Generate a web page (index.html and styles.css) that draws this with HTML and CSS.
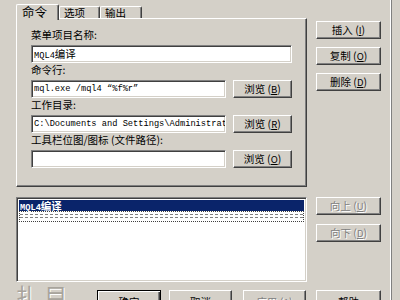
FILE: index.html
```html
<!DOCTYPE html>
<html lang="zh-CN">
<head>
  <meta charset="UTF-8" />
  <title>工具菜单</title>
  <link rel="stylesheet" href="styles.css">
</head>
<body>
<div class="window">
  <div class="dialog">

    <div class="tabbox">
      <div class="tabs">
        <div class="tab active">命令</div>
        <div class="tab">选项</div>
        <div class="tab last">输出</div>
      </div>
      <div class="panel">
        <div class="field-label">菜单项目名称:</div>
        <div class="field-row">
          <div class="textbox wide">MQL4<span class="cjk">编译</span></div>
        </div>

        <div class="field-label">命令行:</div>
        <div class="field-row">
          <div class="textbox">mql.exe /mql4 “%f%r”</div>
          <button class="btn browse">浏览 (<u>B</u>)</button>
        </div>

        <div class="field-label">工作目录:</div>
        <div class="field-row">
          <div class="textbox">C:\Documents and Settings\Administrat</div>
          <button class="btn browse">浏览 (<u>R</u>)</button>
        </div>

        <div class="field-label">工具栏位图/图标 (文件路径):</div>
        <div class="field-row">
          <div class="textbox"></div>
          <button class="btn browse">浏览 (<u>O</u>)</button>
        </div>
      </div>
    </div>

    <div class="side side-top">
      <button class="btn">插入 (<u>I</u>)</button>
      <button class="btn">复制 (<u>O</u>)</button>
      <button class="btn">删除 (<u>D</u>)</button>
    </div>

    <div class="listbox">
      <div class="list-item selected">MQL4<span class="cjk">编译</span></div>
      <div class="list-item sep"><div class="dashes"></div></div>
    </div>

    <div class="side side-bottom">
      <button class="btn disabled">向上 (<u>U</u>)</button>
      <button class="btn disabled">向下 (<u>D</u>)</button>
    </div>

    <div class="footer">
      <div class="ghost">扎 目</div>
      <button class="btn big default">确定</button>
      <button class="btn big cancel">取消</button>
      <button class="btn big apply disabled">应用 (<u>A</u>)</button>
      <button class="btn big help">帮助</button>
    </div>

  </div>
</div>
</body>
</html>
```

FILE: styles.css
```css
body {
  margin: 0;
  width: 400px;
  height: 300px;
  overflow: hidden;
  background: #d4d0c8;
  font-family: "Noto Sans CJK SC", sans-serif;
  font-size: 10.5px;
  color: #000;
}

.window {
  width: 390px;
  height: 300px;
  border-right: 1px solid #fff;
  box-shadow: 1px 0 0 #808080;
}

.dialog {
  display: grid;
  grid-template-columns: 291px 65px;
  column-gap: 9px;
  padding: 4px 0 0 16px;
}

/* tabs */
.tabs {
  display: flex;
  align-items: flex-end;
  height: 14px;
}

.tab {
  box-sizing: border-box;
  height: 12px;
  width: 41px;
  border-top: 1px solid #fff;
  border-left: 1px solid #fff;
  border-right: 1px solid #404040;
  border-radius: 2px 2px 0 0;
  box-shadow: inset -1px 0 0 #808080;
  padding-left: 4px;
  line-height: 11px;
  font-size: 10.5px;
}

.tab.last {
  width: 42px;
}

.tab.active {
  position: relative;
  height: 16px;
  width: 43px;
  margin-bottom: -2px;
  padding-left: 5px;
  background: #d4d0c8;
  font-size: 12.5px;
  line-height: 14px;
}

.panel {
  box-sizing: border-box;
  height: 169px;
  border: 1px solid;
  border-color: #fff #404040 #404040 #fff;
  box-shadow: inset -1px -1px 0 #808080;
  padding: 9px 0 0 14px;
}

.field-label {
  height: 14px;
  line-height: 14px;
  margin-bottom: 3px;
  white-space: nowrap;
}

.field-row {
  display: flex;
  gap: 7px;
  height: 18px;
}

.textbox {
  box-sizing: border-box;
  width: 195px;
  height: 18px;
  background: #fff;
  border: 1px solid;
  border-color: #808080 #fff #fff #808080;
  box-shadow: inset 1px 1px 0 #404040, inset -1px -1px 0 #d4d0c8;
  padding: 0 0 0 2px;
  font-family: "Liberation Mono", monospace;
  font-size: 8.7px;
  line-height: 16px;
  white-space: nowrap;
  overflow: hidden;
}

.textbox.wide {
  width: 261px;
}

.cjk {
  font-family: "Noto Sans CJK SC", sans-serif;
  font-size: 10.5px;
}

/* buttons */
.btn {
  box-sizing: border-box;
  width: 65px;
  height: 18px;
  padding: 0;
  background: #d4d0c8;
  border: 1px solid;
  border-color: #fff #404040 #404040 #fff;
  box-shadow: inset -1px -1px 0 #808080;
  font-family: "Noto Sans CJK SC", sans-serif;
  font-size: 10.5px;
  line-height: 14px;
  color: #000;
  white-space: nowrap;
}

.btn u {
  font-size: 9.5px;
}

.btn.browse {
  width: 59px;
}

.btn.disabled {
  color: #808080;
  text-shadow: 1px 1px 0 #fff;
}

.side {
  display: flex;
  flex-direction: column;
  gap: 8px;
}

.side-top {
  padding-top: 17px;
}

.side-bottom {
  margin-top: 10px;
  gap: 9px;
}

/* list */
.listbox {
  box-sizing: border-box;
  margin-top: 10px;
  height: 85px;
  background: #fff;
  border: 1px solid;
  border-color: #808080 #fff #fff #808080;
  box-shadow: inset 1px 1px 0 #404040, inset -1px -1px 0 #d4d0c8;
  padding: 2px 2px;
}

.list-item {
  height: 11px;
  line-height: 11px;
  padding-left: 1px;
  font-family: "Liberation Mono", monospace;
  font-size: 8.7px;
  font-weight: bold;
}

.list-item.selected {
  background: #0a246a;
  color: #fff;
}

.list-item.sep {
  box-sizing: border-box;
  border: 1px dotted #404040;
  padding: 2px 0 0;
}

.dashes {
  height: 2px;
  border-top: 1px dashed #808080;
  border-bottom: 1px dashed #808080;
}

/* footer */
.footer {
  grid-column: 1 / -1;
  display: flex;
  margin-top: 8px;
}

.ghost {
  width: 81px;
  margin-top: -8px;
  font-size: 23px;
  line-height: 26px;
  color: #a8a49c;
  text-shadow: 1px 1px 0 #fff;
  white-space: nowrap;
}

.btn.big {
  height: 23px;
  width: 63px;
}

.btn.default {
  width: 64px;
  border: 1px solid #000;
  box-shadow: inset 1px 1px 0 #fff, inset -1px -1px 0 #404040, inset -2px -2px 0 #808080;
}

.btn.cancel {
  margin-left: 8px;
}

.btn.apply {
  margin-left: 11px;
}

.btn.help {
  margin-left: 10px;
  width: 65px;
}
```
